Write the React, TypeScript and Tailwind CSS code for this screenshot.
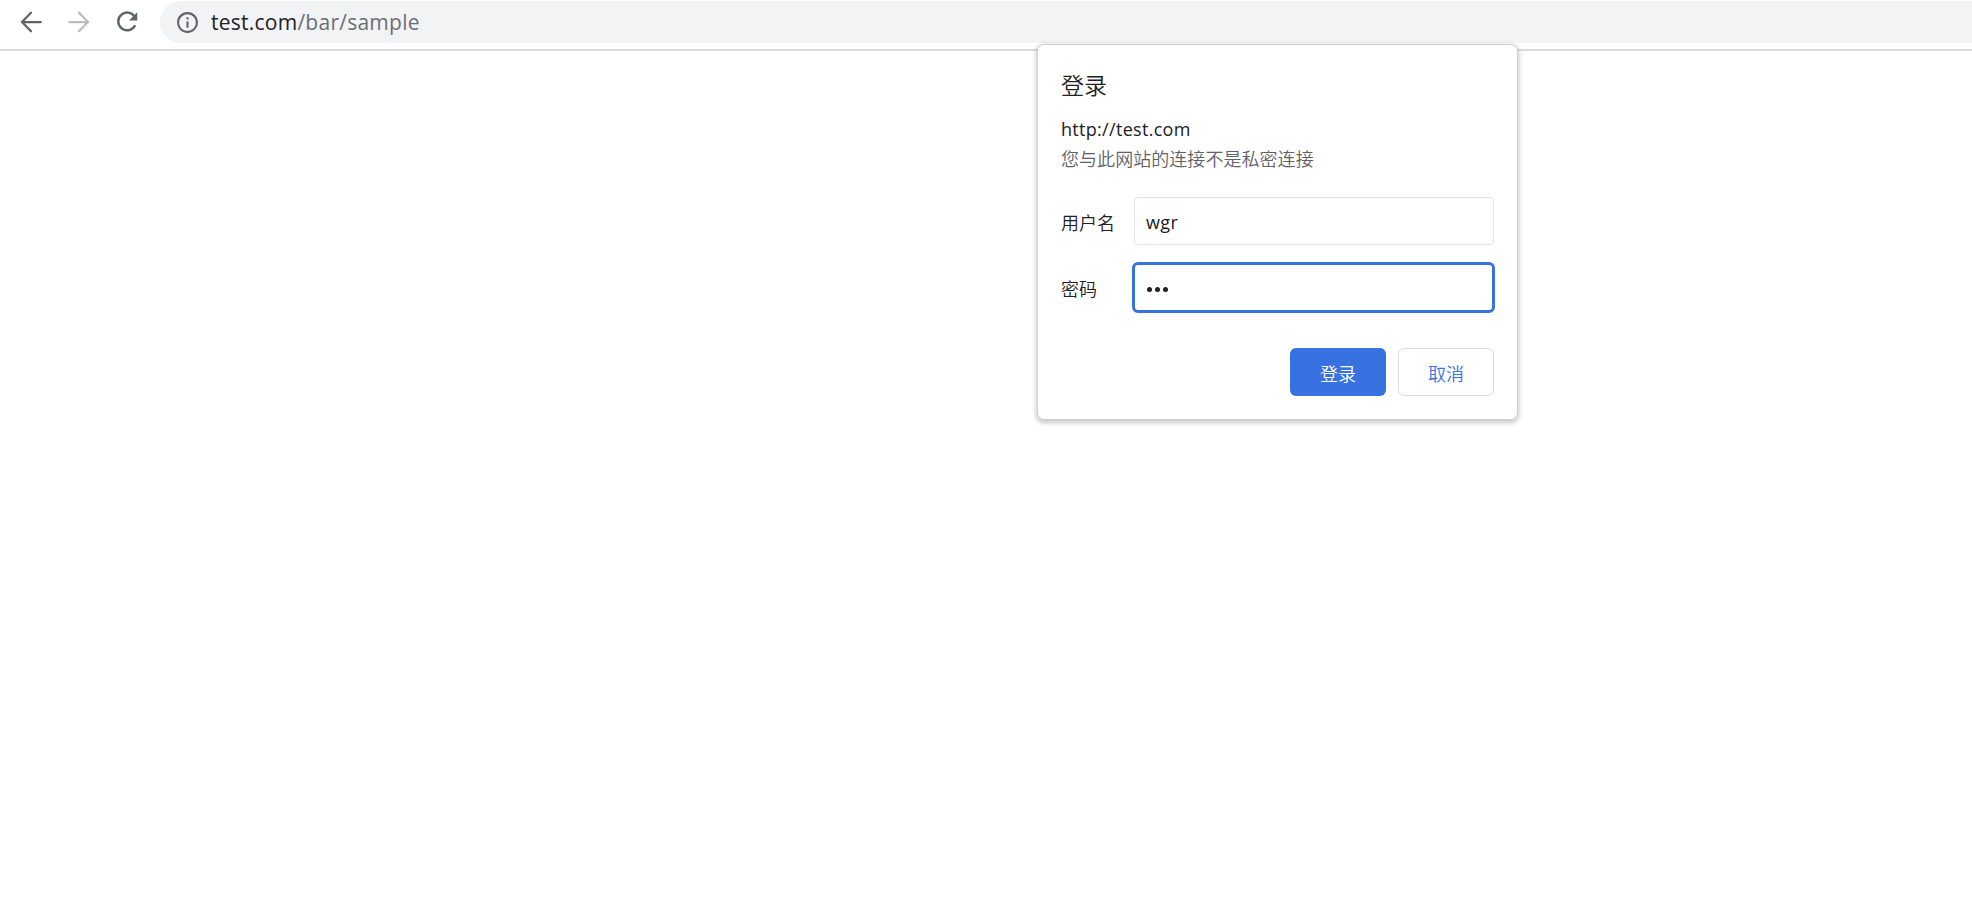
import type { ReactNode } from "react";

const Icon = ({ children, className }: { children: ReactNode; className: string }) => (
  <svg viewBox="0 0 24 24" fill="currentColor" className={className}>
    {children}
  </svg>
);

const Toolbar = () => (
  <header className="flex h-[51px] items-start border-b-2 border-[#dadbdc] bg-white pt-px">
    <nav className="flex h-[42px] w-40 shrink-0 items-center gap-[18px] pl-4 text-[#5f6368]">
      <Icon className="size-[30px]">
        <path d="M12 4.6 4.8 12l7.2 7.4M5 12h14.8" fill="none" stroke="currentColor" strokeWidth="1.8" strokeLinecap="round" />
      </Icon>
      <Icon className="size-[30px] text-[#babcbe]">
        <path d="M12 4.6 19.2 12 12 19.4M19 12H4.4" fill="none" stroke="currentColor" strokeWidth="1.8" strokeLinecap="round" />
      </Icon>
      <Icon className="size-[30px]">
        <path d="M18.2 7.9A7.1 7.1 0 1 0 18.5 14.6" fill="none" stroke="currentColor" strokeWidth="1.9" />
        <path d="M20.2 4.2v6.6h-6.6z" />
      </Icon>
    </nav>
    <div className="flex h-[42px] flex-1 items-center rounded-l-full bg-[#f1f3f4] pl-[15px]">
      <Icon className="size-[25px] text-[#5f6368]">
        <path d="M11 7h2v2h-2zm0 4h2v6h-2zm1-9C6.48 2 2 6.48 2 12s4.48 10 10 10 10-4.48 10-10S17.52 2 12 2zm0 18c-4.41 0-8-3.59-8-8s3.59-8 8-8 8 3.59 8 8-3.59 8-8 8z" />
      </Icon>
      <span className="ml-[11px] text-[21px] leading-none tracking-[0.25px] text-[#202124]">
        test.com<span className="text-[#6b6f73]">/bar/sample</span>
      </span>
    </div>
  </header>
);

const LoginDialog = () => (
  <section
    role="dialog"
    className="absolute left-[1037px] top-[44px] h-[376px] w-[481px] rounded-[7px] border border-[#cfcfcf] bg-white px-[23px] text-lg text-[#202124] shadow-[0_2px_5px_1px_rgba(0,0,0,0.22)]"
  >
    <h1 className="mt-6 text-[23px] font-[350] leading-8">登录</h1>
    <p className="mt-[13px] leading-[30px] tracking-[0.3px]">http://test.com</p>
    <p className="font-[350] leading-[30px] tracking-[0.05px] text-[#5f6368]">您与此网站的连接不是私密连接</p>

    <div className="mt-[23px] flex h-12 items-center">
      <label className="w-[73px] pt-[3px] font-[350]">用户名</label>
      <div className="flex h-12 w-[360px] items-center rounded-[4px] border border-[#e4e4e4] pl-[11px] pt-px tracking-[0.4px]">wgr</div>
    </div>
    <div className="mt-[17px] flex h-[51px] items-center">
      <label className="w-[71px] shrink-0 pt-0.5 font-[350]">密码</label>
      <div className="flex h-[51px] w-[363px] shrink-0 items-center gap-[3px] rounded-[6px] border-[3px] border-[#3871e0] pl-3">
        {[0, 1, 2].map((i) => (
          <span key={i} className="mt-[3px] size-[5px] rounded-full bg-[#202124]" />
        ))}
      </div>
    </div>

    <div className="mt-[35px] flex justify-end gap-3">
      <button className="h-12 w-24 rounded-[6px] bg-[#3871e0] pt-[3px] font-[350] text-white">登录</button>
      <button className="h-12 w-24 rounded-[6px] border border-[#dadce0] pt-[3px] font-[350] text-[#3871e0]">取消</button>
    </div>
  </section>
);

export default function App() {
  return (
    <div className="relative h-[921px] w-full overflow-hidden bg-white font-['Open_Sans','Noto_Sans_CJK_SC',sans-serif]">
      <Toolbar />
      <LoginDialog />
    </div>
  );
}
